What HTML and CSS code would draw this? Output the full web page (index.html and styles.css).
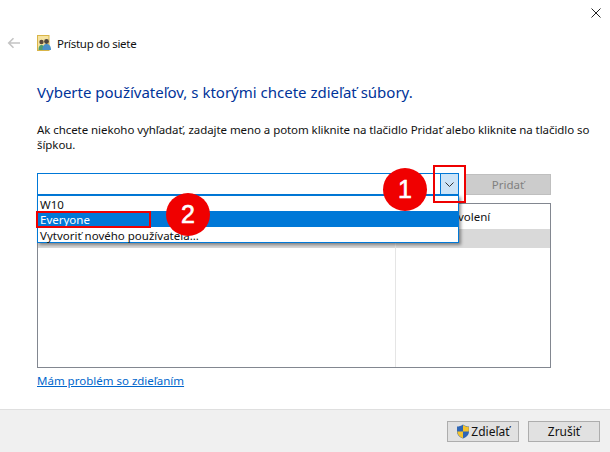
FILE: index.html
```html
<!DOCTYPE html>
<html lang="sk">
<head>
<meta charset="utf-8">
<title>Prístup do siete</title>
<link rel="stylesheet" href="styles.css">
</head>
<body>
<div class="window">
  <div class="titlebar">
    <svg class="close" width="10" height="10" viewBox="0 0 10 10"><path d="M0.5 0.5L9.5 9.5M9.5 0.5L0.5 9.5" stroke="#222" fill="none"/></svg>
  </div>
  <div class="nav">
    <svg class="back" width="14" height="12" viewBox="0 0 14 12"><path d="M13 6H2M6.5 1.2L1.7 6L6.5 10.8" stroke="#c4c4c4" stroke-width="1.6" fill="none"/></svg>
    <svg class="app-icon" width="14" height="16" viewBox="0 0 14 16">
      <rect x="0.5" y="0.5" width="11.500" height="15" fill="#f6e3a0" stroke="#d9b548"/>
      <circle cx="4.500" cy="7" r="2.2" fill="#5b4a3a"/>
      <path d="M1.500 15c0-4 1.500-5 3-5s3 1 3 5z" fill="#4f9c6e"/>
      <circle cx="9.500" cy="6.500" r="2.400" fill="#4a4540"/>
      <path d="M5.500 15c0-5 2-6 4-6s4.500 1 4.500 6z" fill="#4a90c8"/>
    </svg>
    <span class="nav-title">Prístup do siete</span>
  </div>
  <main class="content">
    <h1 class="heading">Vyberte používateľov, s ktorými chcete zdieľať súbory.</h1>
    <p class="hint">Ak chcete niekoho vyhľadať, zadajte meno a potom kliknite na tlačidlo Pridať alebo kliknite na tlačidlo so šípkou.</p>
    <div class="picker">
      <div class="combo">
        <div class="combo-input"></div>
        <div class="combo-arrow">
          <svg width="9" height="5" viewBox="0 0 9 5"><path d="M0.5 0.500L4.500 4.500L8.500 0.500" stroke="#333" fill="none"/></svg>
        </div>
        <ul class="dropdown">
          <li class="option">W10</li>
          <li class="option selected">Everyone</li>
          <li class="option">Vytvoriť nového používateľa...</li>
        </ul>
      </div>
      <button class="add" type="button">Pridať</button>
    </div>
    <div class="table">
      <div class="table-head">
        <div class="col-name"></div>
        <div class="col-perm">Úroveň povolení</div>
      </div>
      <div class="table-row">
        <div class="col-name"></div>
        <div class="col-perm"></div>
      </div>
      <div class="table-rest">
        <div class="col-name"></div>
        <div class="col-perm"></div>
      </div>
    </div>
    <a class="help" href="#">Mám problém so zdieľaním</a>
  </main>
  <footer class="footer">
    <button class="btn btn-share" type="button">
      <svg width="14" height="15" viewBox="0 0 14 15">
        <path d="M7 0.500C9 2 11 2.500 13 2.500V7.500C13 11 10 13.500 7 14.500C4 13.500 1 11 1 7.500V2.500C3 2.500 5 2 7 0.500Z" fill="#2f66b5"/>
        <path d="M7 1C9 2.300 11 2.800 12.800 2.800V7.500H7Z" fill="#f5c32c"/>
        <path d="M1.200 7.500H7V14.200C4 13.200 1.500 11 1.200 7.500Z" fill="#f5c32c"/>
      </svg>
      <span>Zdieľať</span>
    </button>
    <button class="btn" type="button">Zrušiť</button>
  </footer>
  <div class="marker marker-arrow"></div>
  <div class="marker marker-option"></div>
  <div class="badge badge-one">1</div>
  <div class="badge badge-two">2</div>
</div>
</body>
</html>
```
FILE: styles.css
```css
* { box-sizing: border-box; }
html, body { margin: 0; padding: 0; }
body { font-family: "Noto Sans", "Open Sans", sans-serif; font-size: 11.5px; color: #111; background: #fff; }
.window { position: relative; width: 610px; height: 452px; display: flex; flex-direction: column; overflow: hidden; background: #fff; }
.titlebar { height: 30px; display: flex; justify-content: flex-end; align-items: flex-start; padding: 8px 9px 0 0; flex: none; }
.close { display: block; }
.nav { height: 26px; display: flex; align-items: center; padding-left: 7px; flex: none; }
.back { margin-right: 16px; }
.app-icon { margin-right: 6px; }
.nav-title { font-size: 11.5px; letter-spacing: -0.3px; color: #111; }
.content { flex: 1; padding: 26px 59px 0 37px; display: flex; flex-direction: column; min-height: 0; }
.heading { margin: 0; font-size: 15px; line-height: 20px; font-weight: 400; color: #003399; }
.hint { margin: 20px 0 0; width: 560px; font-size: 11.5px; line-height: 15px; letter-spacing: -0.07px; color: #111; }
.picker { margin-top: 21px; display: flex; gap: 6px; align-items: center; height: 23px; position: relative; }
.combo { position: relative; width: 422px; height: 23px; display: flex; border: 1px solid #0078d7; border-bottom-width: 2px; }
.combo-input { flex: 1; }
.combo-arrow { width: 18px; display: flex; align-items: center; justify-content: center; background: #cce4f7; border-left: 1px solid #0078d7; }
.dropdown { position: absolute; z-index: 2; left: -1px; top: 21px; width: 422px; height: 48px; margin: 0; padding: 0; list-style: none; background: #fff; border: 1px solid #0078d7; box-shadow: 2px 2px 3px rgba(0,0,0,.4); }
.option { height: 15px; line-height: 17px; padding-left: 2px; color: #111; }
.selected { height: 16px; background: #0078d7; color: #fff; }
.add { width: 86px; height: 21px; padding: 0; font: inherit; background: #cccccc; color: #808080; border: 1px solid #bfbfbf; }
.table { margin-top: 7px; height: 165px; border: 1px solid #828790; display: flex; flex-direction: column; }
.table-head, .table-row, .table-rest { display: flex; }
.table-head { height: 25px; line-height: 25px; }
.table-row { height: 19px; background: #d9d9d9; }
.table-rest { flex: 1; }
.col-name { width: 358px; border-right: 1px solid #e5e5e5; }
.col-perm { flex: 1; padding-left: 6px; }
.help { margin-top: 5px; width: 146px; color: #0066cc; text-decoration: underline; font-size: 11.5px; line-height: 16px; white-space: nowrap; }
.footer { flex: none; height: 43px; background: #f0f0f0; border-top: 1px solid #dfdfdf; display: flex; justify-content: flex-end; align-items: center; gap: 9px; padding: 0 10px 0 0; }
.btn { width: 72px; height: 21px; padding: 0; font: inherit; font-size: 12px; color: #111; background: #e1e1e1; border: 1px solid #adadad; display: flex; align-items: center; justify-content: center; gap: 1px; }
.marker { position: absolute; z-index: 3; border: 2px solid #ee0000; }
.marker-arrow { left: 433px; top: 165px; width: 33px; height: 38px; }
.marker-option { left: 36px; top: 211px; width: 115px; height: 17px; }
.badge { position: absolute; z-index: 4; width: 44px; height: 43px; border-radius: 50%; background: #f00000; color: #fff; font: 400 25px/43px "Liberation Sans", sans-serif; -webkit-text-stroke: 0.6px #fff; text-align: center; }
.badge-one { left: 383px; top: 168px; }
.badge-two { left: 166px; top: 193px; }
```
